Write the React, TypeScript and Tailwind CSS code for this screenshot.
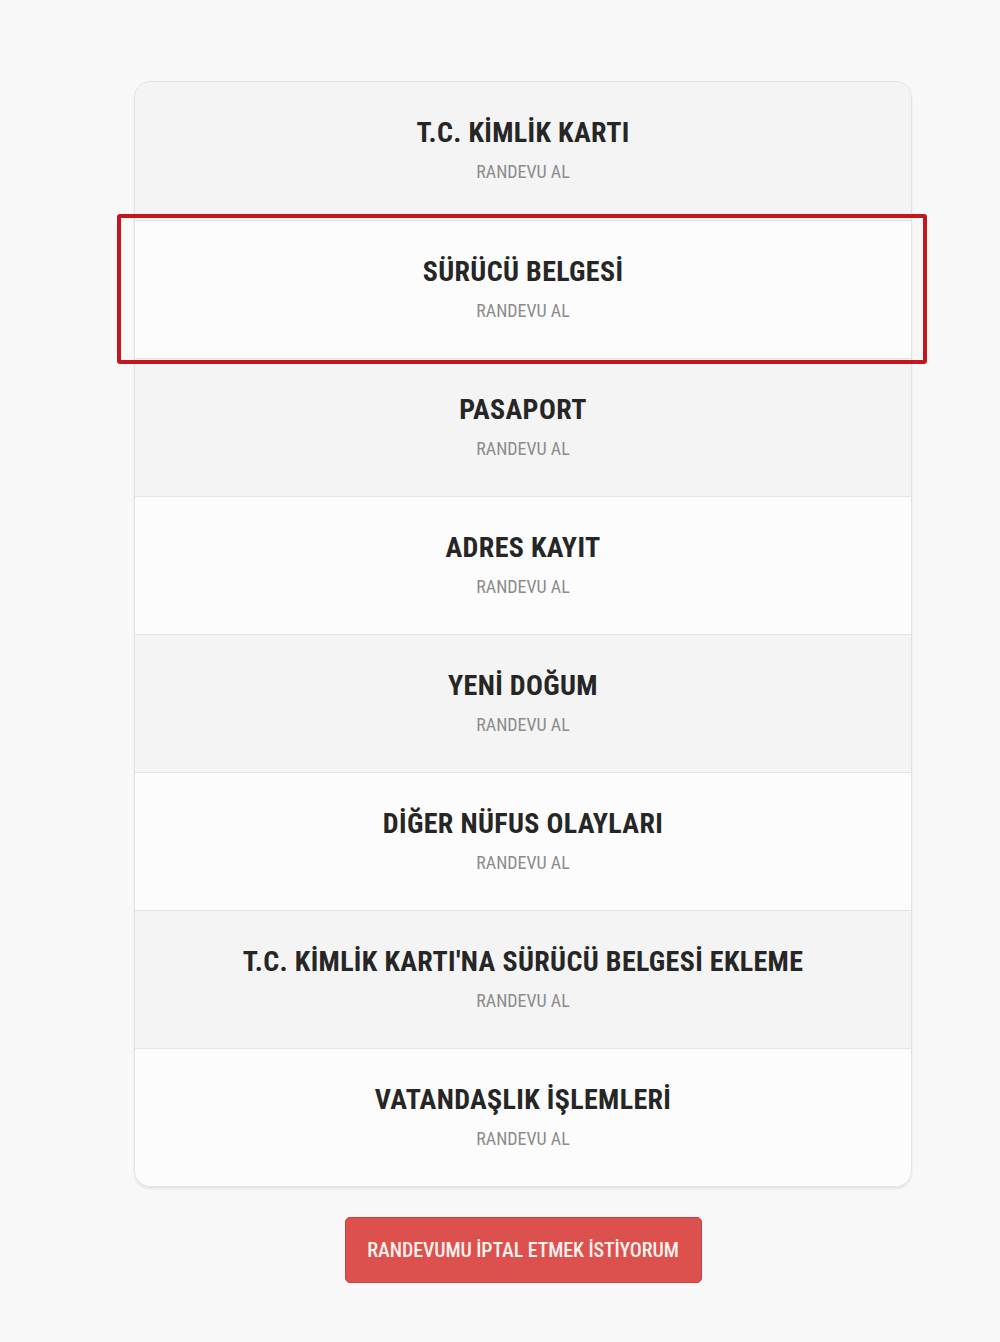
const services = [
  "T.C. KİMLİK KARTI",
  "SÜRÜCÜ BELGESİ",
  "PASAPORT",
  "ADRES KAYIT",
  "YENİ DOĞUM",
  "DİĞER NÜFUS OLAYLARI",
  "T.C. KİMLİK KARTI'NA SÜRÜCÜ BELGESİ EKLEME",
  "VATANDAŞLIK İŞLEMLERİ",
];

const font = { fontFamily: '"Roboto Condensed", "Open Sans Condensed", "Liberation Sans", sans-serif' };

export default function App() {
  return (
    <div className="min-h-[1342px] w-full bg-[#f8f8f9] pt-[81px]" style={font}>
      <div className="ml-[134px] w-[778px]">
        {/* Service list */}
        <div className="rounded-2xl border border-[#e2e2e2] shadow-[0_2px_2px_rgba(0,0,0,0.08)]">
          {services.map((title, i) => (
            <div
              key={title}
              className={[
                "relative flex h-[138px] flex-col items-center pt-[35px]",
                i > 0 ? "border-t border-[#e4e4e4]" : "",
                i === 0 ? "rounded-t-2xl" : "",
                i === services.length - 1 ? "rounded-b-2xl" : "",
                i % 2 === 0 ? "bg-[#f4f4f4]" : "bg-[#fcfcfc]",
              ].join(" ")}
            >
              <h3 className="text-[28px] font-bold leading-[32px] tracking-[0.35px] text-[#262626]">{title}</h3>
              <p className="mt-[11px] text-[18px] leading-[24px] text-[#8c8c8c]">RANDEVU AL</p>
              {i === 1 && (
                <div className="pointer-events-none absolute -left-[18px] -right-[16px] -top-[7px] -bottom-[6px] z-10 rounded-[3px] border-[4px] border-[#c4161c]" />
              )}
            </div>
          ))}
        </div>

        {/* Cancel */}
        <div className="mt-[30px] flex justify-center">
          <button className="h-[66px] w-[357px] rounded-[5px] border border-[#c9403c] bg-[#dc514d] text-[20px] font-medium tracking-[-0.1px] text-[#fdf1ee]">
            RANDEVUMU İPTAL ETMEK İSTİYORUM
          </button>
        </div>
      </div>
    </div>
  );
}
